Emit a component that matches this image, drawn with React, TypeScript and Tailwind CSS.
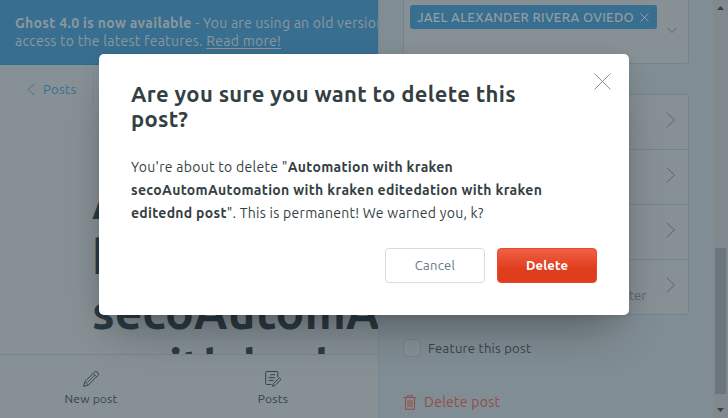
import type { ReactNode } from "react";

function Chevron({ className }: { className?: string }) {
  return (
    <svg className={className} width="10" height="16" viewBox="0 0 10 16" fill="none" stroke="currentColor">
      <path d="M1 1l7.5 7L1 15" strokeLinecap="round" strokeLinejoin="round" />
    </svg>
  );
}

function Cross({ size, className }: { size: number; className?: string }) {
  return (
    <svg className={className} width={size} height={size} viewBox={`0 0 ${size} ${size}`} stroke="currentColor">
      <path d={`M.5 .5L${size - 0.5} ${size - 0.5}M${size - 0.5} .5L.5 ${size - 0.5}`} />
    </svg>
  );
}

function Pencil() {
  return (
    <svg width="16" height="16" viewBox="0 0 16 16" fill="none" stroke="currentColor" strokeLinejoin="round">
      <path d="M.6 15.4l1.3-4.7L11.6 1a1.7 1.7 0 0 1 2.4 0l1 1a1.7 1.7 0 0 1 0 2.4l-9.7 9.7z" />
      <path d="M10.2 2.4l3.4 3.4M1.9 10.7l3.4 3.4M11.9 4.1l-7.6 7.6" strokeWidth=".8" />
    </svg>
  );
}

function PostsIcon() {
  return (
    <svg width="17" height="16" viewBox="0 0 17 16" fill="none" stroke="currentColor" strokeLinejoin="round">
      <path d="M6.5 13.5h-5a.8.8 0 0 1-.8-.8V1.3A.8.8 0 0 1 1.500.5h10.500a.8.8 0 0 1 .8.8v5" />
      <path d="M5.500 3.700h4.500M3.500 6.700h6.500M3.500 9.500h5" />
      <path d="M7.500 15.200l.7-2.500 5.400-5.200a1.200 1.200 0 0 1 1.700 1.700l-5.300 5.300z" />
    </svg>
  );
}

function Trash() {
  return (
    <svg width="14" height="15" viewBox="0 0 14 15" fill="none" stroke="currentColor">
      <path d="M.5 2.500h13M4.500 2.500V.7h5v1.800M2.500 2.500v11.800h9V2.500M5 5v7M7 5v7M9 5v7" />
    </svg>
  );
}

function Tab({ icon, children }: { icon: ReactNode; children: ReactNode }) {
  return (
    <div className="flex w-[182px] flex-col items-center pt-4 text-xs leading-4 tracking-[0.22px] text-[#33444c]">
      {icon}
      <span className="mt-1">{children}</span>
    </div>
  );
}

function Editor() {
  return (
    <div className="flex h-full w-[378px] flex-col overflow-hidden whitespace-nowrap bg-[#869095]">
      <div className="h-[65px] shrink-0 border-b border-[#2a6d96] bg-[#386f90] pl-[15px] pt-[14px] text-sm leading-[18px] text-[#8c979d]">
        <div>
          <b className="tracking-[0.32px]">Ghost 4.0 is now available</b>
          <span className="tracking-[0.26px]"> - You are using an old version</span>
        </div>
        <div className="tracking-[0.27px]">
          access to the latest features. <span className="underline underline-offset-2">Read more!</span>
        </div>
      </div>
      <div className="flex h-12 shrink-0 items-center pl-[27px] text-[13px] text-[#386f90]">
        <Chevron className="h-[13px] w-2 rotate-180" />
        <span className="ml-2 mt-[2px] w-[50px] tracking-[0.4px]">Posts</span>
        <i className="mt-[-6px] h-[37px] w-px bg-[#7d8a91]" />
      </div>
      <div className="h-[241px] shrink-0 overflow-hidden pl-[92px] pt-[61px] text-[48px] font-bold leading-[55px] text-[#2b3b44]">
        <div>Automation with</div>
        <div>kraken</div>
        <div>secoAutomA</div>
        <div>n with kraken</div>
      </div>
      <div className="flex h-16 shrink-0 border-t border-[#77878f] pr-3.5">
        <Tab icon={<Pencil />}>New post</Tab>
        <Tab icon={<PostsIcon />}>Posts</Tab>
      </div>
    </div>
  );
}

function Settings() {
  return (
    <div className="flex h-full w-[335px] flex-col border-l border-[#78878f] bg-[#818d94] pl-6 pr-6">
      <div className="flex h-16 shrink-0 items-start justify-between rounded-b-[3px] border border-t-0 border-[#74848d] bg-[#869095] pl-1.5 pr-[11px] pt-[5px]">
        <div className="flex h-6 w-[247px] items-center rounded-[3px] bg-[#386f90] pl-[7px] text-[13px] font-medium text-[#939da2]">
          <span className="mt-px w-[223px] whitespace-nowrap tracking-[0.31px]">JAEL ALEXANDER RIVERA OVIEDO</span>
          <Cross size={9} className="shrink-0" />
        </div>
        <svg className="mt-[22px] text-[#56676f]" width="10" height="7" viewBox="0 0 10 7" fill="none" stroke="currentColor">
          <path d="M.5 1L5 5.500L9.500 1" />
        </svg>
      </div>
      <div className="mt-[30px] shrink-0 divide-y divide-[#74848d] rounded-[3px] border border-[#74848d] bg-[#869095] text-[#56676f]">
        {["", "", "", "ter"].map((text, i) => (
          <div key={i} className={`flex justify-end pr-3 pt-[17px] text-[13px] ${i < 3 ? "h-[55px]" : "h-[54px]"}`}>
            <span className="mt-[8px] w-[37px] leading-[20px]">{text}</span>
            <Chevron />
          </div>
        ))}
      </div>
      <div className="mt-6 flex h-[18px] items-center text-[13px] text-[#33444c]">
        <i className="h-[18px] w-[18px] rounded-[3px] border border-[#74848d] bg-[#869095]" />
        <span className="ml-[7px] mt-[2px] tracking-[0.28px]">Feature this post</span>
      </div>
      <div className="mt-[35px] flex items-center text-sm leading-5 text-[#934e47]">
        <Trash />
        <span className="ml-[7px] tracking-[0.27px]">Delete post</span>
      </div>
    </div>
  );
}

function Scrollbar() {
  return (
    <div className="flex h-full w-[15px] flex-col items-center bg-[#7f898e]">
      <svg className="mt-[6px]" width="7" height="4" viewBox="0 0 7 4"><path d="M0 4L3.500 0L7 4" fill="#384348" /></svg>
      <div className="mt-[238px] h-[146px] w-[11px] bg-[#6b767c]" />
      <svg className="mt-[14px]" width="7" height="4" viewBox="0 0 7 4"><path d="M0 0L3.500 4L7 0" fill="#384348" /></svg>
    </div>
  );
}

function DeleteDialog() {
  return (
    <div className="absolute left-[99px] top-[54px] h-[261px] w-[530px] whitespace-nowrap rounded-[5px] bg-white pl-8 pr-8 pt-[27px] text-[#343f44] shadow-[0_2px_4px_rgba(0,0,0,0.06),0_4px_24px_rgba(0,0,0,0.06),0_26px_44px_-14px_rgba(0,0,0,0.32)]">
      <Cross size={17} className="absolute right-[18px] top-[19px] text-[#8d9497]" />
      <h1 className="text-[22px] font-bold leading-[25px] tracking-[0.33px]">
        <div>Are you sure you want to delete this</div>
        <div>post?</div>
      </h1>
      <div className="mt-[25px] text-sm leading-[23px]">
        <div><span className="tracking-[0.29px]">You're about to delete "</span><b className="tracking-[0.29px]">Automation with kraken</b></div>
        <div><b className="tracking-[0.32px]">secoAutomAutomation with kraken editedation with kraken</b></div>
        <div><b className="tracking-[0.29px]">editednd post</b><span className="tracking-[0.27px]">". This is permanent! We warned you, k?</span></div>
      </div>
      <div className="mt-[23px] flex justify-end gap-3 text-[13px]">
        <button className="h-[35px] w-[100px] rounded-[4px] border border-[#d3dee4] tracking-[0.3px] text-[#66787f] shadow-[0_1px_1px_rgba(0,0,0,0.02)]">Cancel</button>
        <button className="h-[35px] w-[100px] rounded-[4px] border border-[#e8492a] bg-linear-to-b from-[#f15f43] to-[#df3d1b] to-60% font-semibold tracking-[0.15px] text-white">Delete</button>
      </div>
    </div>
  );
}

export default function App() {
  return (
    <div className="relative flex h-[418px] w-[728px] overflow-hidden font-['Ubuntu','Noto_Sans',sans-serif]">
      <Editor />
      <Settings />
      <Scrollbar />
      <DeleteDialog />
    </div>
  );
}
